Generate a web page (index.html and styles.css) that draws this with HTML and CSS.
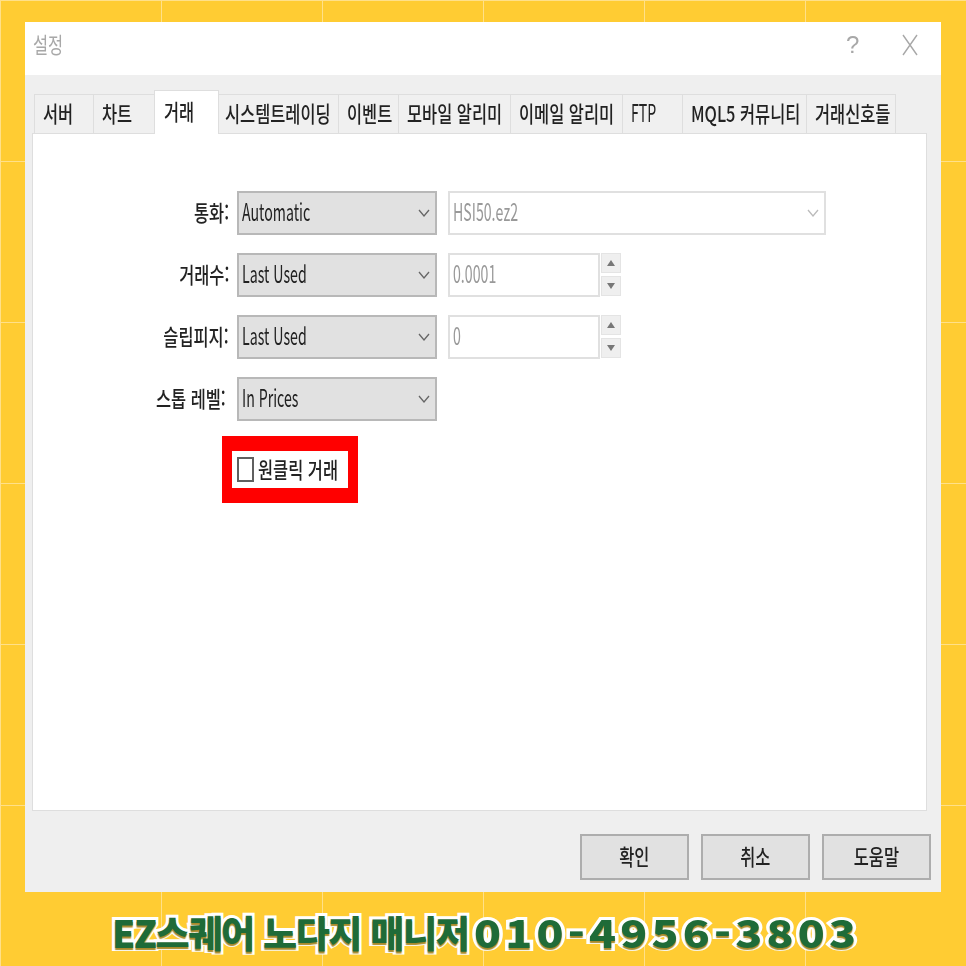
FILE: index.html
```html
<!DOCTYPE html>
<html lang="ko">
<head>
  <meta charset="UTF-8">
  <title>설정</title>
  <meta name="viewport" content="width=device-width, initial-scale=1.0">
  <link rel="stylesheet" href="styles.css">
</head>
<body>
  <div class="window">
    <div class="titlebar">
      <span class="title"><span class="txt">설정</span></span>
      <span class="help">?</span>
      <svg class="close" width="16" height="22" viewBox="0 0 16 22"><path d="M1 1 L15 21 M15 1 L1 21" fill="none" stroke="#a8a8a8" stroke-width="1.4"/></svg>
    </div>

    <div class="dialog">
      <div class="tabs">
        <div class="tab w60"><span class="txt">서버</span></div>
        <div class="tab w61"><span class="txt">차트</span></div>
        <div class="tab active"><span class="txt">거래</span></div>
        <div class="tab w120 tight"><span class="txt">시스템트레이딩</span></div>
        <div class="tab w60"><span class="txt">이벤트</span></div>
        <div class="tab w112"><span class="txt">모바일 알리미</span></div>
        <div class="tab w112"><span class="txt">이메일 알리미</span></div>
        <div class="tab w60"><span class="txt latin">FTP</span></div>
        <div class="tab w124"><span class="txt">MQL5 커뮤니티</span></div>
        <div class="tab w89"><span class="txt">거래신호들</span></div>
      </div>

      <div class="panel">
        <div class="form">
          <label class="lbl"><span class="txt right">통화:</span></label>
          <div class="select"><span class="txt latin">Automatic</span>
            <svg class="chev" width="12" height="8" viewBox="0 0 12 8"><path d="M1 1 L6 7 L11 1" fill="none" stroke="#666" stroke-width="1.3"/></svg>
          </div>
          <div class="select off"><span class="txt latin">HSI50.ez2</span>
            <svg class="chev" width="12" height="8" viewBox="0 0 12 8"><path d="M1 1 L6 7 L11 1" fill="none" stroke="#bbb" stroke-width="1.3"/></svg>
          </div>

          <label class="lbl"><span class="txt right">거래수:</span></label>
          <div class="select"><span class="txt latin">Last Used</span>
            <svg class="chev" width="12" height="8" viewBox="0 0 12 8"><path d="M1 1 L6 7 L11 1" fill="none" stroke="#666" stroke-width="1.3"/></svg>
          </div>
          <div class="numeric">
            <div class="input"><span class="txt latin">0.0001</span></div>
            <div class="spin"><button class="spin-btn up"></button><button class="spin-btn down"></button></div>
          </div>

          <label class="lbl"><span class="txt right">슬립피지:</span></label>
          <div class="select"><span class="txt latin">Last Used</span>
            <svg class="chev" width="12" height="8" viewBox="0 0 12 8"><path d="M1 1 L6 7 L11 1" fill="none" stroke="#666" stroke-width="1.3"/></svg>
          </div>
          <div class="numeric">
            <div class="input"><span class="txt latin">0</span></div>
            <div class="spin"><button class="spin-btn up"></button><button class="spin-btn down"></button></div>
          </div>

          <label class="lbl stop"><span class="txt right">스톱 레벨:</span></label>
          <div class="select"><span class="txt latin">In Prices</span>
            <svg class="chev" width="12" height="8" viewBox="0 0 12 8"><path d="M1 1 L6 7 L11 1" fill="none" stroke="#666" stroke-width="1.3"/></svg>
          </div>
          <div></div>

          <div class="highlight">
            <span class="check"></span>
            <span class="txt">원클릭 거래</span>
          </div>
        </div>
      </div>

      <div class="actions">
        <button class="btn"><span class="txt">확인</span></button>
        <button class="btn"><span class="txt">취소</span></button>
        <button class="btn"><span class="txt">도움말</span></button>
      </div>
    </div>
  </div>

  <div class="caption">EZ스퀘어 노다지 매니저<span class="phone">010-4956-3803</span></div>
</body>
</html>
```

FILE: styles.css
```css
html, body {
  margin: 0;
  padding: 0;
}
body {
  width: 966px;
  height: 966px;
  box-sizing: border-box;
  padding-top: 22px;
  overflow: hidden;
  font-family: "Noto Sans CJK KR", "Noto Sans", sans-serif;
  color: #222;
  background-color: #ffcc33;
  background-image:
    repeating-linear-gradient(to right, #ffe08a 0 1px, transparent 1px 161px),
    repeating-linear-gradient(to bottom, #ffe08a 0 1px, transparent 1px 161px);
}

/* dialog */
.window {
  width: 916px;
  height: 870px;
  margin-left: 25px;
  display: flex;
  flex-direction: column;
  background: #efefef;
  filter: blur(0.6px);
}
.txt {
  display: inline-block;
  font-size: 22px;
  font-weight: 500;
  line-height: 24px;
  padding-bottom: 4px;
  white-space: nowrap;
  transform: scaleX(0.745);
  transform-origin: left center;
}
.txt.latin {
  font-size: 24px;
  font-weight: 400;
  transform: scaleX(0.59);
}
.txt.right {
  transform-origin: right center;
}
.titlebar {
  height: 53px;
  background: #fff;
  display: flex;
  align-items: center;
  color: #a8a8a8;
  padding: 0 23px 8px 8px;
  box-sizing: border-box;
}
.title {
  flex: 1;
}
.title .txt {
  font-weight: 400;
}
.help {
  margin-right: 44px;
  width: 12px;
  font-size: 24px;
  line-height: 26px;
  font-family: "Liberation Sans", sans-serif;
  text-align: center;
}
.close {
  display: block;
}

.dialog {
  flex: 1;
  display: flex;
  flex-direction: column;
  padding: 19px 0 0 7px;
}

/* tabs */
.tabs {
  display: flex;
  height: 39px;
  margin-left: 2px;
  position: relative;
  z-index: 1;
}
.tab {
  box-sizing: border-box;
  border: 1px solid #dedede;
  border-bottom: none;
  border-left-width: 0;
  height: 39px;
  display: flex;
  align-items: center;
  padding-left: 8px;
  background: #f0f0f0;
  overflow: hidden;
}
.tab:first-child {
  border-left-width: 1px;
}
.tab.tight {
  padding-left: 6px;
}
.w60 { width: 60px; }
.w61 { width: 61px; }
.w89 { width: 89px; }
.w112 { width: 112px; }
.w120 { width: 120px; }
.w124 { width: 124px; }
.tab.active {
  width: 65px;
  height: 44px;
  margin-top: -4px;
  margin-left: -1px;
  background: #fff;
  border-left-width: 1px;
  align-items: flex-start;
  padding-top: 7px;
  padding-left: 9px;
}

.panel {
  width: 895px;
  height: 678px;
  box-sizing: border-box;
  background: #fff;
  border: 1px solid #dedede;
  padding-top: 57px;
}
.form {
  display: grid;
  grid-template-columns: 196px 200px 381px;
  column-gap: 8px;
  row-gap: 18px;
  grid-auto-rows: 44px;
}
.lbl {
  display: flex;
  align-items: center;
  justify-content: flex-end;
}
.lbl.stop {
  padding-right: 3px;
}
.select {
  box-sizing: border-box;
  height: 44px;
  display: flex;
  align-items: center;
  justify-content: space-between;
  padding: 0 4px 0 3px;
  background: #e1e1e1;
  border: 2px solid #b8b8b8;
}
.select.off {
  background: #fff;
  border-color: #e0e0e0;
  color: #999;
  margin-left: 3px;
}
.chev {
  margin-right: 1px;
}
.numeric {
  display: flex;
  margin-left: 3px;
  gap: 1px;
}
.input {
  width: 152px;
  height: 44px;
  box-sizing: border-box;
  display: flex;
  align-items: center;
  padding-left: 3px;
  background: #fff;
  border: 2px solid #e0e0e0;
  color: #999;
}
.spin {
  display: flex;
  flex-direction: column;
  gap: 3px;
}
.spin-btn {
  width: 20px;
  height: 20px;
  padding: 0;
  background: #efefef;
  border: 1px solid #e4e4e4;
  display: flex;
  align-items: center;
  justify-content: center;
}
.spin-btn::before {
  content: "";
  border-left: 4px solid transparent;
  border-right: 4px solid transparent;
}
.up::before {
  border-bottom: 6px solid #777;
}
.down::before {
  border-top: 6px solid #777;
}

/* red box around the one click option */
.highlight {
  grid-column: 2;
  margin-left: -15px;
  margin-top: -3px;
  width: 136px;
  height: 67px;
  box-sizing: border-box;
  border: solid #ff0000;
  border-width: 15px 10px;
  display: flex;
  align-items: center;
  padding-left: 5px;
  gap: 4px;
  background: #fff;
}
.check {
  width: 17px;
  height: 25px;
  box-sizing: border-box;
  border: 2px solid #606060;
  flex: none;
}

.actions {
  display: flex;
  gap: 12px;
  margin-top: 23px;
  padding-left: 548px;
}
.btn {
  width: 109px;
  height: 46px;
  padding: 0;
  background: #e1e1e1;
  border: 2px solid #adadad;
  font-family: inherit;
  color: inherit;
}
.btn .txt {
  transform-origin: center;
}

/* bottom banner */
.caption {
  margin: 17px 0 0 112px;
  font-size: 37px;
  line-height: 46px;
  font-weight: 900;
  white-space: nowrap;
  color: #1f6b38;
  -webkit-text-stroke: 6px #fff;
  paint-order: stroke fill;
  text-shadow: 0 2px 1px #a98a2a;
  letter-spacing: -1.3px;
}
.phone {
  display: inline-block;
  margin-left: 6px;
  letter-spacing: 3.5px;
  transform: scaleX(1.2);
  transform-origin: left center;
}
```
